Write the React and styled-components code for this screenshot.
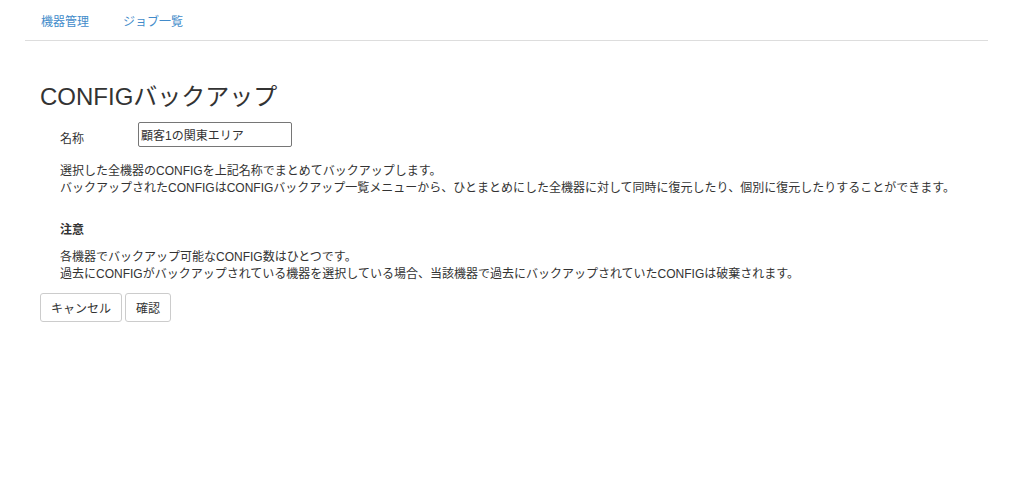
import React from 'react';
import styled, { createGlobalStyle } from 'styled-components';

const GlobalStyle = createGlobalStyle`
  body {
    margin: 0;
    padding: 0;
    background: #fff;
    color: #333;
    font-family: "Liberation Sans", Arial, "Noto Sans CJK JP", sans-serif;
    font-size: 12px;
  }
`;

const Page = styled.div`
  padding: 0 25px;
`;

const NavTabs = styled.nav`
  display: flex;
  height: 40px;
  border-bottom: 1px solid #ddd;
`;

const NavLink = styled.a`
  display: flex;
  align-items: center;
  padding: 0 16px;
  margin-right: 2px;
  color: #428bca;
  text-decoration: none;
  font-size: 12px;
  cursor: pointer;
`;

const Content = styled.div`
  padding: 0 15px;
`;

const Title = styled.h3`
  margin: 43px 0 0;
  font-size: 24px;
  font-weight: normal;
  line-height: 26px;
  color: #333;
`;

const FormRow = styled.div`
  display: flex;
  align-items: flex-start;
  margin: 12px 0 0 20px;
`;

const Label = styled.label`
  width: 78px;
  padding-top: 9px;
  line-height: 16px;
`;

const TextInput = styled.input`
  width: 154px;
  height: 25px;
  box-sizing: border-box;
  padding: 1px 2px;
  border: 1px solid #767676;
  border-radius: 2px;
  font-family: inherit;
  font-size: 12px;
  color: #333;
  outline: none;
`;

const Paragraph = styled.p`
  margin: ${p => p.$top || 0}px 0 0 20px;
  line-height: 17px;
`;

const Note = styled.h5`
  margin: 25px 0 0 20px;
  font-size: 12px;
  font-weight: bold;
  line-height: 17px;
`;

const Buttons = styled.div`
  display: flex;
  gap: 3px;
  margin-top: 10px;
`;

const Button = styled.button`
  height: 29px;
  padding: 0 10px;
  background: #fff;
  border: 1px solid #ccc;
  border-radius: 3px;
  font-family: inherit;
  font-size: 12px;
  color: #333;
  cursor: pointer;
`;

export default function App() {
  const [name, setName] = React.useState('顧客1の関東エリア');

  return (
    <Page>
      <GlobalStyle />
      <NavTabs>
        <NavLink>機器管理</NavLink>
        <NavLink>ジョブ一覧</NavLink>
      </NavTabs>
      <Content>
        <Title>CONFIGバックアップ</Title>
        <FormRow>
          <Label>名称</Label>
          <TextInput value={name} onChange={e => setName(e.target.value)} />
        </FormRow>
        <Paragraph $top={16}>
          選択した全機器のCONFIGを上記名称でまとめてバックアップします。<br />
          バックアップされたCONFIGはCONFIGバックアップ一覧メニューから、ひとまとめにした全機器に対して同時に復元したり、個別に復元したりすることができます。
        </Paragraph>
        <Note>注意</Note>
        <Paragraph $top={10}>
          各機器でバックアップ可能なCONFIG数はひとつです。<br />
          過去にCONFIGがバックアップされている機器を選択している場合、当該機器で過去にバックアップされていたCONFIGは破棄されます。
        </Paragraph>
        <Buttons>
          <Button>キャンセル</Button>
          <Button>確認</Button>
        </Buttons>
      </Content>
    </Page>
  );
}
